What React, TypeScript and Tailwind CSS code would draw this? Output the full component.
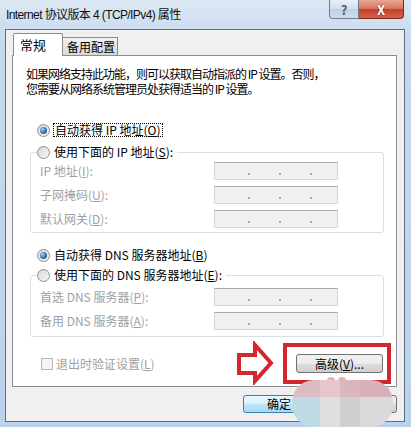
import React from 'react';

const Radio: React.FC<{ checked?: boolean }> = ({ checked }) => (
  <span className="flex h-[13px] w-[13px] shrink-0 items-center justify-center rounded-full border border-[#8f8f8f] bg-[linear-gradient(135deg,#d6d6d6,#f8f8f8)]">
    {checked && (
      <span className="h-[7px] w-[7px] rounded-full bg-[radial-gradient(circle_at_35%_35%,#a6d4f6,#2f6fb0_55%,#0f3f78)]" />
    )}
  </span>
);

const IpBox = () => (
  <div className="flex h-[18px] w-[124px] items-end gap-[29px] border border-[#d6d6d6] border-t-[#aaaaaa] bg-[#f0f0f0] pb-[4px] pl-[33px]">
    <span className="h-[2px] w-[2px] bg-[#a9a9a9]" />
    <span className="h-[2px] w-[2px] bg-[#a9a9a9]" />
    <span className="h-[2px] w-[2px] bg-[#a9a9a9]" />
  </div>
);

const Field: React.FC<{ children: React.ReactNode }> = ({ children }) => (
  <div className="flex h-[18px] items-center">
    <span className="w-[183px] pl-[9px] text-[#a0a0a0]">{children}</span>
    <IpBox />
  </div>
);

const Key: React.FC<{ k: string }> = ({ k }) => (
  <>
    (<span className="underline">{k}</span>)
  </>
);

export default function App() {
  return (
    <div className="relative flex h-[427px] w-[411px] flex-col overflow-hidden bg-[linear-gradient(to_bottom,#dde8f4,#c6d9ee_40px,#bcd2ea)] pb-[5px] pl-[5px] pr-[6px] font-['Noto_Sans_CJK_SC',sans-serif] text-[12px] leading-[14px] text-black">
      {/* title bar */}
      <div className="flex h-[29px] shrink-0 items-start justify-between">
        <span className="pl-[1px] pt-[7px] font-['Liberation_Sans','Noto_Sans_CJK_SC',sans-serif] leading-[16px] tracking-[-0.6px] text-[#111]">
          Internet 协议版本 4 (TCP/IPv4) 属性
        </span>
        <div className="mr-[1px] flex">
          <div className="flex h-[19px] w-[30px] items-center justify-center rounded-bl-[4px] border border-t-0 border-[#6e7d90] bg-[linear-gradient(to_bottom,#e8eef6,#d3dfec_50%,#c0d0e3_51%,#cfdcec)] text-[13px] font-bold leading-none text-[#4f5f73]">
            ?
          </div>
          <div className="flex h-[19px] w-[45px] items-center justify-center rounded-br-[4px] border border-l-0 border-t-0 border-[#7a2a1c] bg-[linear-gradient(to_bottom,#e9a896,#d8735c_50%,#c43f27_51%,#d6604a)] text-[13px] font-bold leading-none text-white [text-shadow:0_0_2px_#5a1a10]">
            X
          </div>
        </div>
      </div>

      {/* dialog body */}
      <div className="flex flex-1 flex-col border border-[#5f6f82] bg-[#f0f0f0] pl-[6px] pr-[7px] pt-[3px]">
        {/* tabs */}
        <div className="flex h-[22px] items-end">
          <div className="relative z-10 -mb-px ml-[1px] flex h-[23px] w-[50px] items-start rounded-t-[2px] border border-b-0 border-[#898c95] bg-white pl-[6px] pt-[4px] text-[13px] leading-[14px]">
            常规
          </div>
          <div className="flex h-[18px] w-[55px] items-start border border-b-0 border-l-0 border-[#898c95] bg-[linear-gradient(to_bottom,#f3f3f3,#e4e4e4_50%,#d8d8d8)] pl-[4px] pt-[2px] text-[12px] leading-[14px]">
            备用配置
          </div>
        </div>

        {/* panel */}
        <div className="flex flex-col border border-[#898c95] bg-white pb-[13px] pt-[10px]">
          <p className="pl-[13px] leading-[15px] tracking-[-1px]">
            如果网络支持此功能，则可以获取自动指派的 IP 设置。否则，
            <br />
            您需要从网络系统管理员处获得适当的 IP 设置。
          </p>

          <div className="ml-[24px] mt-[27px] flex h-[14px] items-center gap-[3px]">
            <Radio checked />
            <span className="border border-dotted border-black px-px leading-[12px]">
              自动获得 IP 地址<Key k="O" />
            </span>
          </div>

          <fieldset className="ml-[17px] mr-[12px] mt-[8px] rounded-[3px] border border-[#d5dfe5] pb-[4px]">
            <legend className="ml-[6px] pr-[4px]">
              <span className="flex h-[14px] items-center gap-[4px]">
                <Radio />
                <span>
                  使用下面的 IP 地址<Key k="S" />:
                </span>
              </span>
            </legend>
            <div className="mt-[3px] flex flex-col gap-[6px]">
              <Field>
                IP 地址<Key k="I" />:
              </Field>
              <Field>
                子网掩码<Key k="U" />:
              </Field>
              <Field>
                默认网关<Key k="D" />:
              </Field>
            </div>
          </fieldset>

          <div className="ml-[24px] mt-[15px] flex h-[14px] items-center gap-[4px]">
            <Radio checked />
            <span>
              自动获得 DNS 服务器地址<Key k="B" />
            </span>
          </div>

          <fieldset className="ml-[17px] mr-[12px] mt-[6px] rounded-[3px] border border-[#d5dfe5] pb-[6px]">
            <legend className="ml-[6px] pr-[4px]">
              <span className="flex h-[14px] items-center gap-[4px]">
                <Radio />
                <span>
                  使用下面的 DNS 服务器地址<Key k="E" />:
                </span>
              </span>
            </legend>
            <div className="mt-[6px] flex flex-col gap-[6px]">
              <Field>
                首选 DNS 服务器<Key k="P" />:
              </Field>
              <Field>
                备用 DNS 服务器<Key k="A" />:
              </Field>
            </div>
          </fieldset>

          <div className="mt-[17px] flex items-center justify-between pl-[28px] pr-[13px]">
            <div className="flex items-center gap-[3px] text-[#a0a0a0]">
              <span className="h-[12px] w-[12px] border border-[#b9b9b9] bg-[#f4f4f4]" />
              <span>
                退出时验证设置<Key k="L" />
              </span>
            </div>
            <button className="h-[19px] w-[87px] rounded-[3px] border border-[#707070] bg-[linear-gradient(to_bottom,#f2f2f2,#ebebeb_50%,#dddddd_51%,#cfcfcf)] text-[12px] leading-none">
              高级<Key k="V" />...
            </button>
          </div>
        </div>

        {/* bottom buttons */}
        <div className="flex justify-end gap-[6px] pt-[8px]">
          <button className="h-[18px] w-[72px] rounded-[3px] border border-[#3c7fb1] bg-[linear-gradient(to_bottom,#eaf6fd,#d9f0fc_50%,#bee6fd_51%,#a7d9f5)] text-[12px] leading-none">
            确定
          </button>
          <button className="h-[18px] w-[76px] rounded-[3px] border border-[#707070] bg-[linear-gradient(to_bottom,#f2f2f2,#ebebeb_50%,#dddddd_51%,#cfcfcf)] text-[12px] leading-none">
            取消
          </button>
        </div>
      </div>

      {/* red annotation */}
      <div className="absolute left-[283px] top-[343px] h-[41px] w-[108px] border-[4px] border-[#d3262e]" />
      <svg className="absolute left-[235px] top-[341px]" width="40" height="44" viewBox="0 0 40 44">
        <path d="M4 14 H20 V4 L36 22 L20 40 V32 H4 Z" fill="#fff" stroke="#d3262e" strokeWidth="4" strokeLinejoin="miter" />
      </svg>

      {/* blurred watermark */}
      <div className="absolute left-[327px] top-[377px] h-[7px] w-[8px] rounded-full bg-[#eab0bb]" />
      <div className="absolute left-[338px] top-[377px] h-[7px] w-[8px] rounded-full bg-[#eab0bb]" />
      <div className="absolute left-[292px] top-[380px] grid h-[47px] w-[101px] grid-cols-[28px_20px_20px_33px] grid-rows-[17px_30px] overflow-hidden rounded-[22px]">
        <div className="bg-[#dcbcc3]" />
        <div className="bg-[#e4c6cb]" />
        <div className="bg-[#dcb6bd]" />
        <div className="bg-[#d8b0b7]" />
        <div className="bg-[#bfdbe5]" />
        <div className="bg-[#dfdfdf]" />
        <div className="bg-[#cfcfcf]" />
        <div className="bg-[#dadada]" />
      </div>
    </div>
  );
}
